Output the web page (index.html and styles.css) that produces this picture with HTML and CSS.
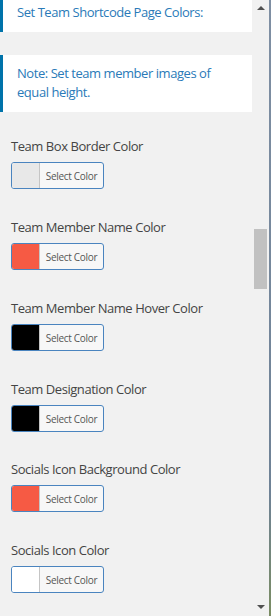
FILE: index.html
```html
<!DOCTYPE html>
<html>
<head>
  <meta charset="UTF-8" />
  <title>Team Colors</title>
  <link rel="stylesheet" href="styles.css">
</head>
<body>
  <div class="page">
    <div class="content">
      <div class="notice first">Set Team Shortcode Page Colors:</div>
      <div class="notice">Note: Set team member images of equal height.</div>

      <div class="fields">
        <div class="field">
          <label>Team Box Border Color</label>
          <button class="color-btn"><span class="swatch light"></span><span class="btn-text">Select Color</span></button>
        </div>
        <div class="field">
          <label>Team Member Name Color</label>
          <button class="color-btn"><span class="swatch red"></span><span class="btn-text">Select Color</span></button>
        </div>
        <div class="field">
          <label>Team Member Name Hover Color</label>
          <button class="color-btn"><span class="swatch black"></span><span class="btn-text">Select Color</span></button>
        </div>
        <div class="field">
          <label>Team Designation Color</label>
          <button class="color-btn"><span class="swatch black"></span><span class="btn-text">Select Color</span></button>
        </div>
        <div class="field">
          <label>Socials Icon Background Color</label>
          <button class="color-btn"><span class="swatch red"></span><span class="btn-text">Select Color</span></button>
        </div>
        <div class="field">
          <label>Socials Icon Color</label>
          <button class="color-btn"><span class="swatch white"></span><span class="btn-text">Select Color</span></button>
        </div>
      </div>
    </div>

    <!-- fake scrollbar -->
    <div class="scrollbar">
      <span class="arrow up"></span>
      <span class="thumb"></span>
      <span class="arrow down"></span>
    </div>
    <div class="edge"></div>
  </div>
</body>
</html>
```

FILE: styles.css
```css
body {
  margin: 0;
  font-family: 'Open Sans', sans-serif;
  background-color: #f1f1f1;
}

.page {
  display: flex;
  height: 616px;
  overflow: hidden;
}

.content {
  flex: 1;
  min-width: 0;
}

.notice {
  background-color: #fff;
  border-left: 3px solid #0073aa;
  padding: 9px 12px 10px 14px;
  color: #2a7ab8;
  font-size: 13px;
  line-height: 19px;
  letter-spacing: -0.45px;
  margin-bottom: 23px;
}

.notice.first {
  padding-top: 3px;
}

.fields {
  padding: 2px 11px 0;
}

.field {
  margin-bottom: 29px;
}

.field:nth-child(5) {
  margin-top: -1px;
}

label {
  display: block;
  color: #444;
  font-size: 13px;
  line-height: 19px;
  letter-spacing: -0.45px;
  margin-bottom: 6px;
}

.color-btn {
  display: flex;
  box-sizing: border-box;
  width: 93px;
  height: 27px;
  padding: 0;
  border: 1px solid #4a84bf;
  border-radius: 3px;
  background-color: #f7f7f7;
  overflow: hidden;
  cursor: pointer;
}

.swatch {
  width: 27px;
  height: 100%;
  border-right: 1px solid #c5c5c5;
  flex-shrink: 0;
}

.swatch.light { background-color: #e8e8e8; }
.swatch.red { background-color: #f65a44; }
.swatch.black { background-color: #000; }
.swatch.white { background-color: #fff; }

.btn-text {
  flex: 1;
  align-self: center;
  text-align: center;
  font-family: 'Open Sans', sans-serif;
  font-size: 10px;
  letter-spacing: -0.3px;
  color: #555;
}

.scrollbar {
  width: 17px;
  background-color: #f1f1f1;
  display: flex;
  flex-direction: column;
  align-items: center;
}

.arrow {
  width: 0;
  height: 0;
  border-left: 4px solid transparent;
  border-right: 4px solid transparent;
}

.arrow.up {
  margin-top: 6px;
  border-bottom: 4px solid #505050;
}

.arrow.down {
  margin-top: auto;
  margin-bottom: 7px;
  border-top: 4px solid #505050;
}

.thumb {
  width: 13px;
  height: 60px;
  margin-top: 219px;
  background-color: #c1c1c1;
}

.edge {
  width: 2px;
  background: linear-gradient(#7f8fa3, #6f8296 80%, #7a8c62);
}
```
